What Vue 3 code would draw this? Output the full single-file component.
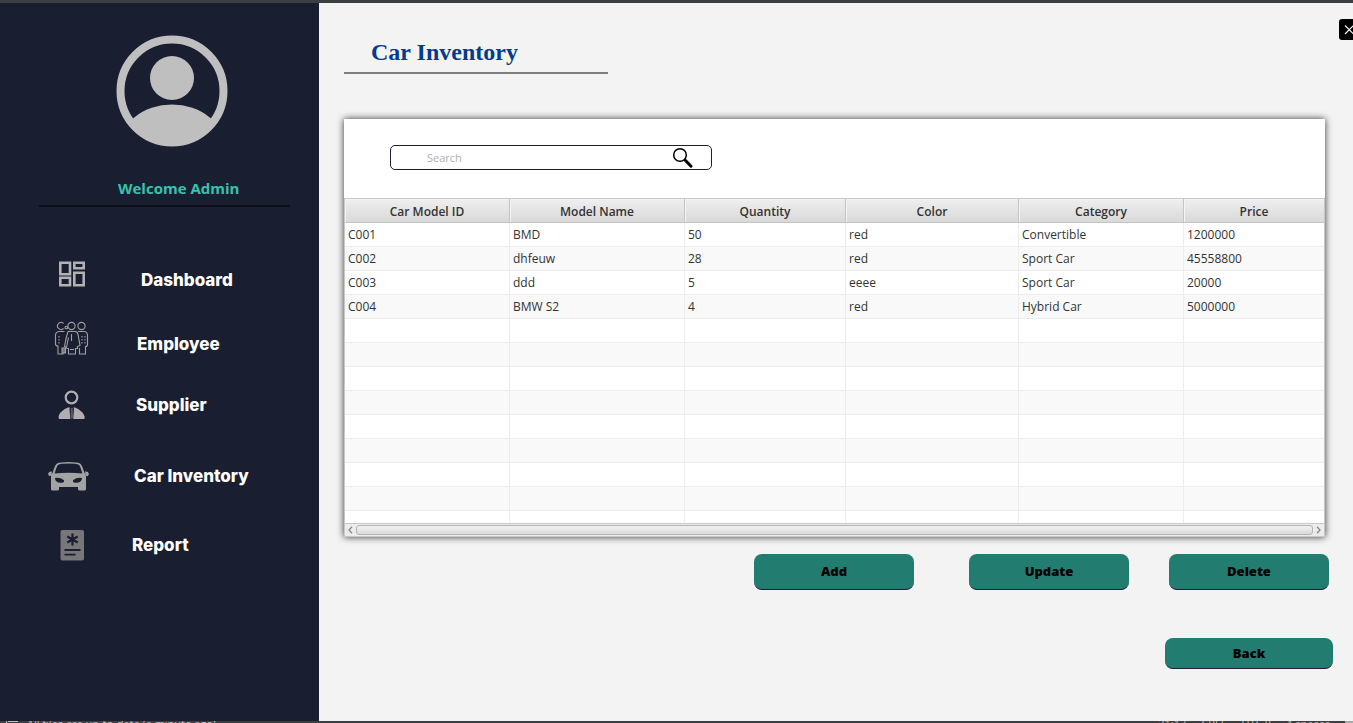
<script setup>
import { ref, computed } from 'vue'

const search = ref('')
const columns = ['Car Model ID', 'Model Name', 'Quantity', 'Color', 'Category', 'Price']
const cars = [
  ['C001', 'BMD', '50', 'red', 'Convertible', '1200000'],
  ['C002', 'dhfeuw', '28', 'red', 'Sport Car', '45558800'],
  ['C003', 'ddd', '5', 'eeee', 'Sport Car', '20000'],
  ['C004', 'BMW S2', '4', 'red', 'Hybrid Car', '5000000'],
]
const rows = computed(() => {
  const term = search.value.toLowerCase()
  const found = cars.filter((car) => car.join(' ').toLowerCase().includes(term))
  while (found.length < 13) found.push(['', '', '', '', '', ''])
  return found
})
</script>

<template>
  <div class="app">
    <div class="edge"></div>
    <div class="body">
      <aside class="sidebar">
        <svg class="avatar" width="112" height="112" viewBox="0 0 112 112" aria-hidden="true">
          <defs>
            <clipPath id="face"><circle cx="56" cy="56" r="54" /></clipPath>
          </defs>
          <circle cx="56" cy="56" r="51.5" fill="none" stroke="#bfbfbf" stroke-width="8" />
          <circle cx="56" cy="43" r="22" fill="#bfbfbf" />
          <ellipse cx="56" cy="113" rx="53" ry="43.500" fill="#bfbfbf" clip-path="url(#face)" />
        </svg>
        <p class="welcome">Welcome Admin</p>
        <nav>
          <a href="#dashboard">
            <svg width="49" height="64" viewBox="0 0 49 64" fill="none" stroke="#b3b1b3" stroke-width="2.600">
              <path d="M12.300 14.800h9.700v11.400h-9.700zM26.300 14.800h9.400v5.400h-9.400zM12.300 29.800h9.700v7.400h-9.700zM26.300 24.800h9.400v12.400h-9.400z" />
            </svg>
            <span>Dashboard</span>
          </a>
          <a href="#employee">
            <svg width="45" height="64" viewBox="0 0 45 64" fill="none" stroke="#a19fa6" stroke-width="1.100">
              <path d="M15.500 11.500a3.500 3.500 0 1 0 0 5" />
              <circle cx="23.500" cy="14" r="3.600" />
              <circle cx="33.500" cy="14" r="3.600" />
              <circle cx="18.300" cy="15.500" r="1.300" />
              <path d="M16.500 19.500h-5q-4 0-4 4v8.500q0 2 2.500 2v8h5v-3" />
              <path d="M20 19.500h7q2.500 0 3 3l2 11-2.500 1v2h-2v5.500h-7v-5.500h-2" />
              <path d="M20 19.500q-2 6-3.500 15l2 1 2-10" />
              <path d="M23.500 22v7" />
              <path d="M22 37.500h4" />
              <path d="M30 19.500h6q3.500 0 3.500 4v9q0 2-2 2v7.500h-6v-6" />
              <path d="M11 24v9M37 24v9M34 24v9" stroke-dasharray="1.500 1.500" />
              <rect x="14" y="36" width="3.500" height="5" fill="#77767f" />
            </svg>
            <span>Employee</span>
          </a>
          <a href="#supplier">
            <svg width="44" height="58" viewBox="0 0 44 58" fill="#b0aeb0">
              <circle cx="23.500" cy="21.500" r="5.800" fill="none" stroke="#b0aeb0" stroke-width="2.200" />
              <path d="M20 31.500h2l-.5 1.500.8 10H11q-1-2 0-4 2-4.500 9-7.500zM27 31.500q7 3 9 7.500 1.200 2 .4 4H25.200L26 33l-.7-1.500z" />
              <path d="M22.900 32h1.800l.5 9.500-1.400 1.500-1.400-1.500z" fill="#55566a" />
            </svg>
            <span>Supplier</span>
          </a>
          <a href="#car-inventory">
            <svg width="42" height="84" viewBox="0 0 42 84" fill="#a3a3a3">
              <path fill-rule="evenodd" d="M20.500 28q8.500 0 11.500 1.500 2 1.200 4.500 9.500 1.500 1 1.500 3v13q0 1.500-1.500 1.500h-5Q30 56.500 30 55v-2H11v2q0 1.500-1.500 1.500h-5Q3 56.500 3 55V42q0-2 1.500-3 2.500-8.300 4.500-9.500Q12 28 20.500 28zm0 1.400q-8 0-10.300 1.300Q8.500 32 6.700 39.600q6-.8 13.800-.8t13.800.8q-1.800-7.600-3.500-8.900-2.300-1.300-10.300-1.300zM7 44q5-1 9 2.200.5 2.300-2 2.600Q7 49.200 7 44zm27 0q-5-1-9 2.200-.5 2.300 2 2.600Q34 49.200 34 44z" />
              <path d="M4 37.500l-.6 4-1.900.7Q0 41 .2 39.500 1 37 4 37.500zM37 37.500l.6 4 1.900.7q1.500-1.200 1.300-2.700-.8-2.500-3.800-2z" />
            </svg>
            <span>Car Inventory</span>
          </a>
          <a href="#report">
            <svg width="40" height="54" viewBox="0 0 40 54">
              <rect x="12.500" y="12" width="23.500" height="30.500" rx="2" fill="#777779" />
              <path d="M24.500 15.500v12M19.300 18.500l10.400 6M29.700 18.500l-10.400 6" stroke="#191e31" stroke-width="2.200" />
              <path d="M16.500 32h16M16.500 36.700h11" stroke="#191e31" stroke-width="1.800" />
            </svg>
            <span>Report</span>
          </a>
        </nav>
      </aside>

      <main>
        <header>
          <h1>Car Inventory</h1>
          <button class="close" type="button" aria-label="Close">
            <svg width="21" height="21" viewBox="0 0 21 21" fill="none" stroke="#fff" stroke-width="1.100">
              <path d="M6 6.500l8.500 8.500M14.500 6.500L6 15" />
            </svg>
          </button>
        </header>

        <section class="card">
          <label class="search">
            <input v-model="search" type="text" placeholder="Search" aria-label="Search" />
            <svg width="21" height="21" viewBox="0 0 21 21" fill="none" stroke="#000" aria-hidden="true">
              <circle cx="8" cy="8" r="6.300" stroke-width="1.500" />
              <path d="M12.500 12.500l1.500 1.500" stroke-width="2" />
              <path d="M13.500 13.500l5.500 5.700" stroke-width="3" stroke-linecap="round" />
            </svg>
          </label>
          <div class="grid">
            <table>
              <colgroup>
                <col v-for="c in columns" :key="c" />
              </colgroup>
              <thead>
                <tr>
                  <th v-for="c in columns" :key="c" scope="col">{{ c }}</th>
                </tr>
              </thead>
              <tbody>
                <tr v-for="(row, i) in rows" :key="i">
                  <td v-for="(cell, j) in row" :key="j">{{ cell }}</td>
                </tr>
              </tbody>
            </table>
          </div>
          <div class="scrollbar">
            <button type="button" aria-label="Scroll left">
              <svg width="5" height="8" viewBox="0 0 5 8"><path d="M4 .8L1 4l3 3.200" /></svg>
            </button>
            <div class="thumb"></div>
            <button type="button" aria-label="Scroll right">
              <svg width="5" height="8" viewBox="0 0 5 8"><path d="M1 .8L4 4 1 7.200" /></svg>
            </button>
          </div>
        </section>

        <div class="actions">
          <div class="edit">
            <button type="button">Add</button>
            <button type="button">Update</button>
          </div>
          <button type="button">Delete</button>
        </div>
        <div class="leave">
          <button type="button">Back</button>
        </div>
      </main>
    </div>
    <footer>
      <svg width="13" height="2" viewBox="0 0 13 2" aria-hidden="true">
        <path d="M0 0h1v2H0zM2 0h10v1H2z" fill="#bbb" />
      </svg>
      <span class="message">All files are up-to-date (a minute ago)</span>
      <span>21:17</span><span>CRLF</span><span>UTF-8</span><span>4 spaces</span>
      <i></i>
    </footer>
  </div>
</template>

<style>
body {
  margin: 0;
}
</style>

<style scoped>
.app {
  min-height: 100vh;
  display: flex;
  flex-direction: column;
  background: #f3f3f3;
  font-family: "Open Sans", "Noto Sans", sans-serif;
  font-size: 12px;
  color: #333;
}
.app * {
  box-sizing: border-box;
}
.edge {
  height: 3px;
  background: #3c3f41;
}
.body {
  flex: 1;
  display: flex;
}
.sidebar {
  width: 319px;
  flex: none;
  background: #191e31;
}
.avatar {
  display: block;
  margin: 32px 0 0 116px;
}
.welcome {
  margin: 30px 29px 0 39px;
  padding: 0 0 6px 79px;
  border-bottom: 2px solid #0d0f18;
  color: #35c3ad;
  font-size: 15px;
  line-height: 22px;
  font-weight: 700;
}
nav {
  margin-top: 41px;
  padding-left: 48px;
}
nav a {
  display: flex;
  align-items: center;
  gap: 44px;
  color: #fff;
  font: 800 17px/20px Inter, "Liberation Sans", Arial, sans-serif;
  text-decoration: none;
}
nav svg {
  flex: none;
}
main {
  flex: 1;
  min-width: 0;
  overflow: hidden;
  padding: 16px 28px 0 25px;
}
header {
  display: flex;
  justify-content: space-between;
  align-items: flex-start;
}
h1 {
  width: 264px;
  height: 55px;
  margin: 0;
  padding: 19px 0 0 27px;
  border-bottom: 2px solid #7e7e7e;
  color: #053b8c;
  font: 700 24px/28px "Liberation Serif", "Times New Roman", serif;
}
.close {
  width: 21px;
  height: 21px;
  margin-right: -35px;
  padding: 0;
  border: 0;
  border-radius: 3px;
  background: #000;
}
.close svg {
  display: block;
}
.card {
  margin-top: 45px;
  padding-top: 26px;
  background: #fff;
  box-shadow: 0 0 7px rgba(0, 0, 0, 0.8);
}
.search {
  display: flex;
  align-items: center;
  width: 322px;
  height: 25px;
  margin: 0 0 28px 46px;
  padding: 0 18px 0 36px;
  border: 1px solid #1b1e36;
  border-radius: 5px;
}
.search input {
  flex: 1;
  min-width: 0;
  padding: 0;
  border: 0;
  outline: 0;
  background: none;
  font: inherit;
  font-size: 11px;
}
.search input::placeholder {
  color: #b0b0b0;
}
.grid {
  height: 325px;
  overflow: hidden;
  border: solid #c8c8c8;
  border-width: 1px 1px 0;
}
table {
  width: 100%;
  table-layout: fixed;
  border-collapse: separate;
  border-spacing: 0;
}
col:nth-child(1),
col:nth-child(5) {
  width: 165px;
}
col:nth-child(2) {
  width: 175px;
}
col:nth-child(3) {
  width: 161px;
}
col:nth-child(4) {
  width: 173px;
}
th {
  height: 24px;
  padding: 2px 0 0;
  border: solid #c4c4c4;
  border-width: 0 1px 1px 0;
  background: linear-gradient(#efefef, #d9d9d9);
  box-shadow: inset 1px 1px #f4f4f4;
  font-size: 12px;
  line-height: 16px;
  font-weight: 600;
}
td {
  height: 24px;
  padding: 0 0 0 3px;
  border: solid #ededed;
  border-width: 0 1px 1px 0;
  font-size: 12px;
  line-height: 16px;
}
th:last-child,
td:last-child {
  border-right: 0;
}
tbody tr:nth-child(even) {
  background: #f9f9f9;
}
.scrollbar {
  display: flex;
  align-items: center;
  height: 14px;
  border: 1px solid #c8c8c8;
  background: #ececec;
}
.scrollbar button {
  display: flex;
  align-items: center;
  justify-content: center;
  width: 11px;
  height: 12px;
  padding: 0;
  border: 0;
  background: none;
}
.scrollbar path {
  fill: none;
  stroke: #888;
  stroke-width: 1.3;
}
.thumb {
  flex: 1;
  height: 10px;
  border: 1px solid #b4b4b4;
  border-radius: 3px;
  background: linear-gradient(#f2f2f2, #dadada);
}
.actions,
.leave {
  display: flex;
  justify-content: flex-end;
  gap: 40px;
  margin: 17px -4px 0 0;
}
.edit {
  display: flex;
  gap: 55px;
}
.actions button,
.leave button {
  width: 160px;
  height: 36px;
  padding: 0 0 1px;
  border: 0;
  border-bottom: 1px solid #1b1e36;
  border-radius: 8px;
  background: #237c70;
  color: #000;
  font: 800 13px/18px "Open Sans", "Noto Sans", sans-serif;
}
.leave {
  margin: 48px -8px 0 0;
}
.leave button {
  width: 168px;
  height: 31px;
}
footer {
  display: flex;
  gap: 15px;
  height: 2px;
  overflow: hidden;
  padding-left: 6px;
  background: #3c3f41;
  color: #bbb;
  font-size: 11px;
  line-height: 6px;
}
.message {
  flex: 1;
  margin-left: -7px;
}
footer i {
  width: 8px;
  background: #aaa;
}
</style>
